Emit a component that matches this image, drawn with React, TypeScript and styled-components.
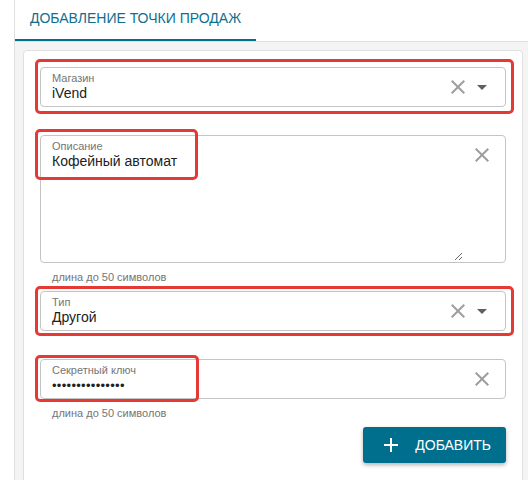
import React from 'react'
import styled, { createGlobalStyle } from 'styled-components'

const GlobalStyle = createGlobalStyle`
    html, body {
        margin: 0;
        padding: 0;
        background: #ffffff;
        font-family: 'Liberation Sans', Arial, sans-serif;
    }
`

type Box = { top: number; left: number; right?: number; bottom?: number; width?: number; height?: number }

export default function App() {
    return (
        <>
            <GlobalStyle />
            <Page>
                <Panel>
                    <TabBar>
                        <Tab $active>Добавление точки продаж</Tab>
                    </TabBar>
                    <Content>
                        <Card>
                            <Field>
                                <InputBox>
                                    <FieldText>
                                        <Label>Магазин</Label>
                                        <Value>iVend</Value>
                                    </FieldText>
                                    <Icons>
                                        <ClearIcon />
                                        <CaretIcon />
                                    </Icons>
                                </InputBox>
                                <Highlight $box={{ top: -8, left: -5, right: -8, bottom: -7 }} />
                                <Helper />
                            </Field>

                            <Field>
                                <AreaBox>
                                    <FieldText>
                                        <Label>Описание</Label>
                                        <Area readOnly defaultValue="Кофейный автомат" />
                                    </FieldText>
                                    <Icons $top>
                                        <ClearIcon />
                                    </Icons>
                                </AreaBox>
                                <Highlight $box={{ top: -6, left: -5, width: 163, height: 51 }} />
                                <Helper>длина до 50 символов</Helper>
                            </Field>

                            <Field>
                                <InputBox>
                                    <FieldText>
                                        <Label>Тип</Label>
                                        <Value>Другой</Value>
                                    </FieldText>
                                    <Icons>
                                        <ClearIcon />
                                        <CaretIcon />
                                    </Icons>
                                </InputBox>
                                <Highlight $box={{ top: -5, left: -5, right: -8, bottom: -5 }} />
                                <Helper />
                            </Field>

                            <Field>
                                <InputBox>
                                    <FieldText>
                                        <Label>Секретный ключ</Label>
                                        <Dots>•••••••••••••••</Dots>
                                    </FieldText>
                                    <Icons>
                                        <ClearIcon />
                                    </Icons>
                                </InputBox>
                                <Highlight $box={{ top: -4, left: -5, width: 164, height: 47 }} />
                                <Helper>длина до 50 символов</Helper>
                            </Field>

                            <Actions>
                                <AddButton>
                                    <PlusIcon />
                                    Добавить
                                </AddButton>
                            </Actions>
                        </Card>
                    </Content>
                </Panel>
            </Page>
        </>
    )
}

function ClearIcon() {
    return (
        <IconSvg viewBox="0 0 24 24" $color="#9e9e9e">
            <path d="M19 6.41L17.59 5 12 10.59 6.41 5 5 6.41 10.59 12 5 17.59 6.41 19 12 13.41 17.59 19 19 17.59 13.41 12z" />
        </IconSvg>
    )
}

function CaretIcon() {
    return (
        <IconSvg viewBox="0 0 24 24" $color="#5f5f5f">
            <path d="M7 10l5 5 5-5z" />
        </IconSvg>
    )
}

function PlusIcon() {
    return (
        <IconSvg viewBox="0 0 24 24" $color="#ffffff">
            <path d="M19 13h-6v6h-2v-6H5v-2h6V5h2v6h6v2z" />
        </IconSvg>
    )
}

const Page = styled.div`
    height: 480px;
    padding-left: 14px;
    box-sizing: border-box;
    overflow: hidden;
`

const Panel = styled.div`
    height: 100%;
    border-left: 1px solid #e0e0e0;
    display: flex;
    flex-direction: column;
`

const TabBar = styled.div`
    display: flex;
    height: 42px;
    box-sizing: border-box;
    border-bottom: 1px solid #e0e0e0;
    background: #ffffff;
`

const Tab = styled.div<{ $active?: boolean }>`
    height: 41px;
    box-sizing: border-box;
    padding: 0 15px;
    display: flex;
    align-items: center;
    padding-bottom: 4px;
    font-size: 14px;
    text-transform: uppercase;
    color: #106f8e;
    border-bottom: 2px solid ${(p) => (p.$active ? '#006f8d' : 'transparent')};
`

const Content = styled.div`
    flex: 1;
    background: #f4f4f4;
    padding: 8px 5px 0 8px;
`

const Card = styled.div`
    background: #ffffff;
    border: 1px solid #e0e0e0;
    border-radius: 4px;
    padding: 16px 16px 20px 16px;
    display: flex;
    flex-direction: column;
`

const Field = styled.div`
    position: relative;
    display: flex;
    flex-direction: column;
`

const InputBox = styled.div`
    height: 40px;
    box-sizing: border-box;
    border: 1px solid #c4c4c4;
    border-radius: 4px;
    display: flex;
    align-items: stretch;
    padding-left: 11px;
`

const AreaBox = styled(InputBox)`
    height: 128px;
`

const FieldText = styled.div`
    flex: 1;
    display: flex;
    flex-direction: column;
    padding-top: 3px;
    min-width: 0;
`

const Label = styled.div`
    font-size: 11px;
    line-height: 14px;
    color: #757575;
`

const Value = styled.div`
    font-size: 14px;
    line-height: 16px;
    color: #212121;
`

const Dots = styled.div`
    font-size: 13px;
    line-height: 18px;
    letter-spacing: 0.3px;
    color: #212121;
`

const Area = styled.textarea`
    flex: 1;
    margin: 0 7px 1px 0;
    padding: 0;
    border: 0;
    outline: none;
    resize: vertical;
    font-family: inherit;
    font-size: 14px;
    line-height: 16px;
    color: #212121;
    background: transparent;
`

const Icons = styled.div<{ $top?: boolean }>`
    display: flex;
    align-items: ${(p) => (p.$top ? 'flex-start' : 'center')};
    padding-top: ${(p) => (p.$top ? '7px' : '0')};
    padding-right: 11px;
`

const IconSvg = styled.svg<{ $color: string }>`
    width: 24px;
    height: 24px;
    flex-shrink: 0;
    fill: ${(p) => p.$color};
`

const Highlight = styled.div<{ $box: Box }>`
    position: absolute;
    pointer-events: none;
    box-sizing: border-box;
    border: 3px solid #e53935;
    border-radius: 5px;
    top: ${(p) => p.$box.top}px;
    left: ${(p) => p.$box.left}px;
    ${(p) => (p.$box.right !== undefined ? `right: ${p.$box.right}px;` : '')}
    ${(p) => (p.$box.bottom !== undefined ? `bottom: ${p.$box.bottom + 28}px;` : '')}
    ${(p) => (p.$box.width !== undefined ? `width: ${p.$box.width}px;` : '')}
    ${(p) => (p.$box.height !== undefined ? `height: ${p.$box.height}px;` : '')}
`

const Helper = styled.div`
    height: 28px;
    line-height: 28px;
    padding-left: 12px;
    font-size: 11px;
    color: #757575;
`

const Actions = styled.div`
    display: flex;
    justify-content: flex-end;
`

const AddButton = styled.button`
    height: 36px;
    display: flex;
    align-items: center;
    gap: 12px;
    padding: 0 15px 0 16px;
    border: 0;
    border-radius: 3px;
    background: #006f8d;
    color: #ffffff;
    font-family: inherit;
    font-size: 14px;
    text-transform: uppercase;
    box-shadow: 0 2px 4px rgba(0, 0, 0, 0.3);
    cursor: pointer;
`
